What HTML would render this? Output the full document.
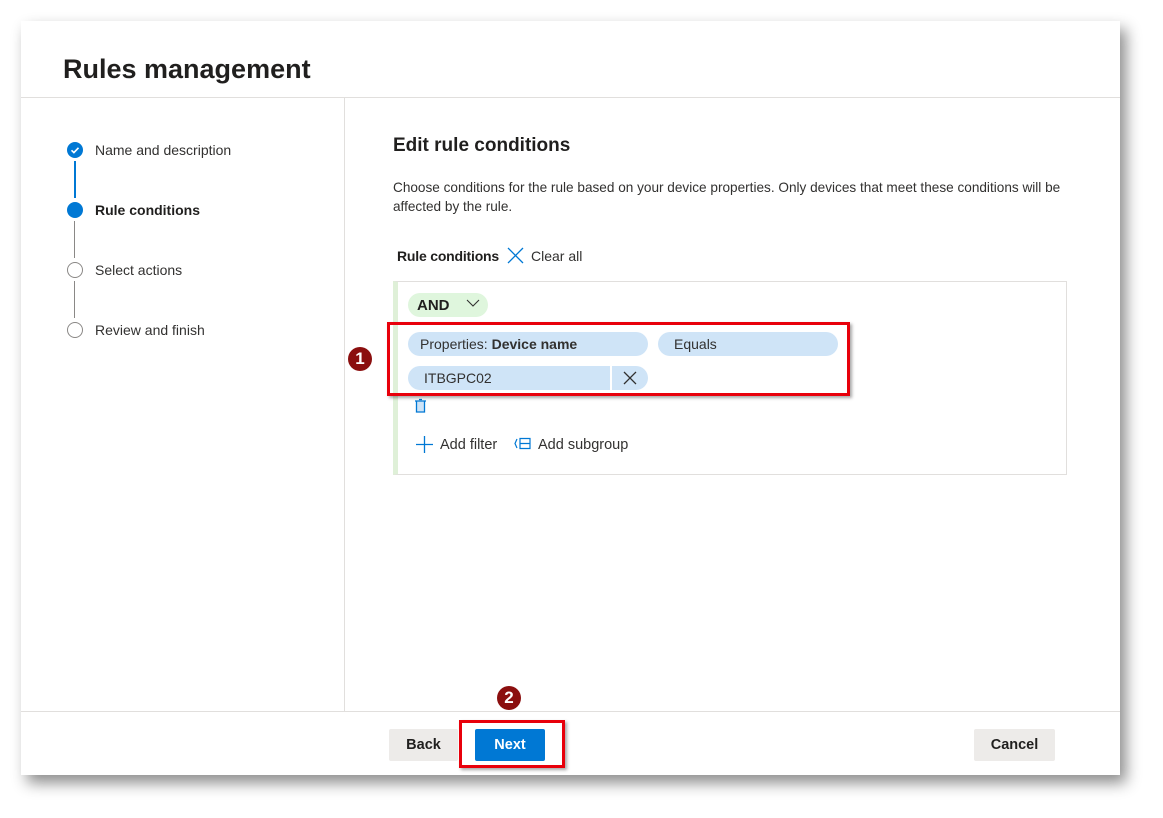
<!DOCTYPE html>
<html><head><meta charset="utf-8"><style>
*{box-sizing:border-box;margin:0;padding:0}
body{width:1163px;height:818px;background:#fff;font-family:"Liberation Sans",sans-serif;color:#323130;position:relative;overflow:hidden}
.abs{position:absolute}
.panel{left:21px;top:21px;width:1099px;height:754px;background:#fff;box-shadow:6px 8px 14px rgba(0,0,0,.45)}
h1{position:absolute;left:63px;top:54px;font-size:27px;font-weight:bold;color:#201f1e}
.hline{height:1px;background:#e1dfdd}
.step{font-size:14px;color:#323130}
.pill{background:#cfe4f7;border-radius:12px;height:24px;font-size:14px;line-height:24px;padding-left:12px}
.btn{height:32px;border-radius:2px;font-size:14.5px;font-weight:bold;text-align:center;line-height:32px}
.badge{width:24px;height:24px;border-radius:50%;background:#8b0f0f;color:#fff;font-weight:bold;font-size:17px;text-align:center;line-height:24px}
</style></head><body>
<div class="abs panel"></div>
<h1>Rules management</h1>
<div class="abs hline" style="left:21px;top:97px;width:1099px"></div>
<div class="abs" style="left:344px;top:97px;width:1px;height:614px;background:#e1dfdd"></div>
<div class="abs hline" style="left:21px;top:711px;width:1099px"></div>

<div class="abs" style="left:67px;top:142px;width:16px;height:16px;border-radius:50%;background:#0078d4"></div>
<svg class="abs" style="left:67px;top:142px" width="16" height="16"><path d="M4.5 8.3l2.4 2.3 4.6-4.8" stroke="#fff" stroke-width="1.6" fill="none"/></svg>
<div class="abs" style="left:74px;top:161px;width:2px;height:37px;background:#0078d4"></div>
<div class="abs" style="left:67px;top:202px;width:16px;height:16px;border-radius:50%;background:#0078d4"></div>
<div class="abs" style="left:74px;top:221px;width:1px;height:37px;background:#8a8886"></div>
<div class="abs" style="left:67px;top:262px;width:16px;height:16px;border-radius:50%;border:1.5px solid #8a8886"></div>
<div class="abs" style="left:74px;top:281px;width:1px;height:37px;background:#8a8886"></div>
<div class="abs" style="left:67px;top:322px;width:16px;height:16px;border-radius:50%;border:1.5px solid #8a8886"></div>
<div class="abs step" style="left:95px;top:142px">Name and description</div>
<div class="abs step" style="left:95px;top:202px;font-weight:bold;color:#201f1e">Rule conditions</div>
<div class="abs step" style="left:95px;top:262px">Select actions</div>
<div class="abs step" style="left:95px;top:322px">Review and finish</div>

<div class="abs" style="left:393px;top:135px;font-size:19px;font-weight:bold;color:#201f1e">Edit rule conditions</div>
<div class="abs" style="left:393px;top:178px;width:680px;font-size:13.6px;line-height:19px">Choose conditions for the rule based on your device properties. Only devices that meet these conditions will be affected by the rule.</div>
<div class="abs" style="left:397px;top:248px;font-size:14px;font-weight:bold;color:#201f1e;letter-spacing:-0.2px">Rule conditions</div>
<svg class="abs" style="left:507px;top:247px" width="17" height="17"><path d="M1 1L16 16M16 1L1 16" stroke="#0078d4" stroke-width="1.3"/></svg>
<div class="abs" style="left:531px;top:248px;font-size:14px">Clear all</div>

<div class="abs" style="left:393px;top:281px;width:674px;height:194px;border:1px solid #e1dfdd;border-left:5px solid #dff0d8"></div>
<div class="abs" style="left:408px;top:293px;width:80px;height:24px;border-radius:12px;background:#dff6dd;font-weight:bold;font-size:15px;line-height:25px;padding-left:9px;color:#201f1e">AND</div>
<svg class="abs" style="left:465px;top:298px" width="16" height="10"><path d="M2 2l6 6 6-6" stroke="#323130" stroke-width="1.1" fill="none"/></svg>

<div class="abs pill" style="left:408px;top:332px;width:240px;line-height:25px">Properties: <b>Device name</b></div>
<div class="abs pill" style="left:658px;top:332px;width:180px;padding-left:16px;line-height:25px">Equals</div>
<div class="abs pill" style="left:408px;top:366px;width:240px;padding-left:16px;line-height:25px">ITBGPC02</div>
<div class="abs" style="left:610px;top:366px;width:2px;height:24px;background:#fff"></div>
<svg class="abs" style="left:623px;top:371px" width="14" height="14"><path d="M1 1L13 13M13 1L1 13" stroke="#323130" stroke-width="1.3"/></svg>

<svg class="abs" style="left:414px;top:398px" width="13" height="16"><path d="M1 3h11M5 1.5h3M2.5 3.5v10.5h8V3.5" stroke="#0078d4" stroke-width="1.3" fill="#cfe4f7"/></svg>
<svg class="abs" style="left:416px;top:436px" width="17" height="17"><path d="M8.5 0v17M0 8.5h17" stroke="#0078d4" stroke-width="1.3"/></svg>
<div class="abs" style="left:440px;top:437px;font-size:14.5px">Add filter</div>
<svg class="abs" style="left:514px;top:437px" width="17" height="13"><path d="M3 2L1 6.5 3 11M6 1.5h10v10H6zM6 6.5h10" stroke="#0078d4" stroke-width="1.2" fill="none"/></svg>
<div class="abs" style="left:538px;top:437px;font-size:14.5px">Add subgroup</div>

<div class="abs" style="left:387px;top:322px;width:463px;height:74px;border:3px solid #e8000b;box-shadow:2px 2px 3px rgba(0,0,0,.35)"></div>
<div class="abs badge" style="left:348px;top:347px">1</div>

<div class="abs btn" style="left:389px;top:729px;width:69px;background:#edebe9;color:#201f1e;line-height:33px">Back</div>
<div class="abs btn" style="left:475px;top:729px;width:70px;background:#0078d4;color:#fff;line-height:33px">Next</div>
<div class="abs" style="left:459px;top:720px;width:106px;height:48px;border:3px solid #e8000b;box-shadow:2px 2px 3px rgba(0,0,0,.35)"></div>
<div class="abs badge" style="left:497px;top:686px">2</div>
<div class="abs btn" style="left:974px;top:729px;width:81px;background:#edebe9;color:#201f1e;line-height:33px">Cancel</div>
</body></html>
